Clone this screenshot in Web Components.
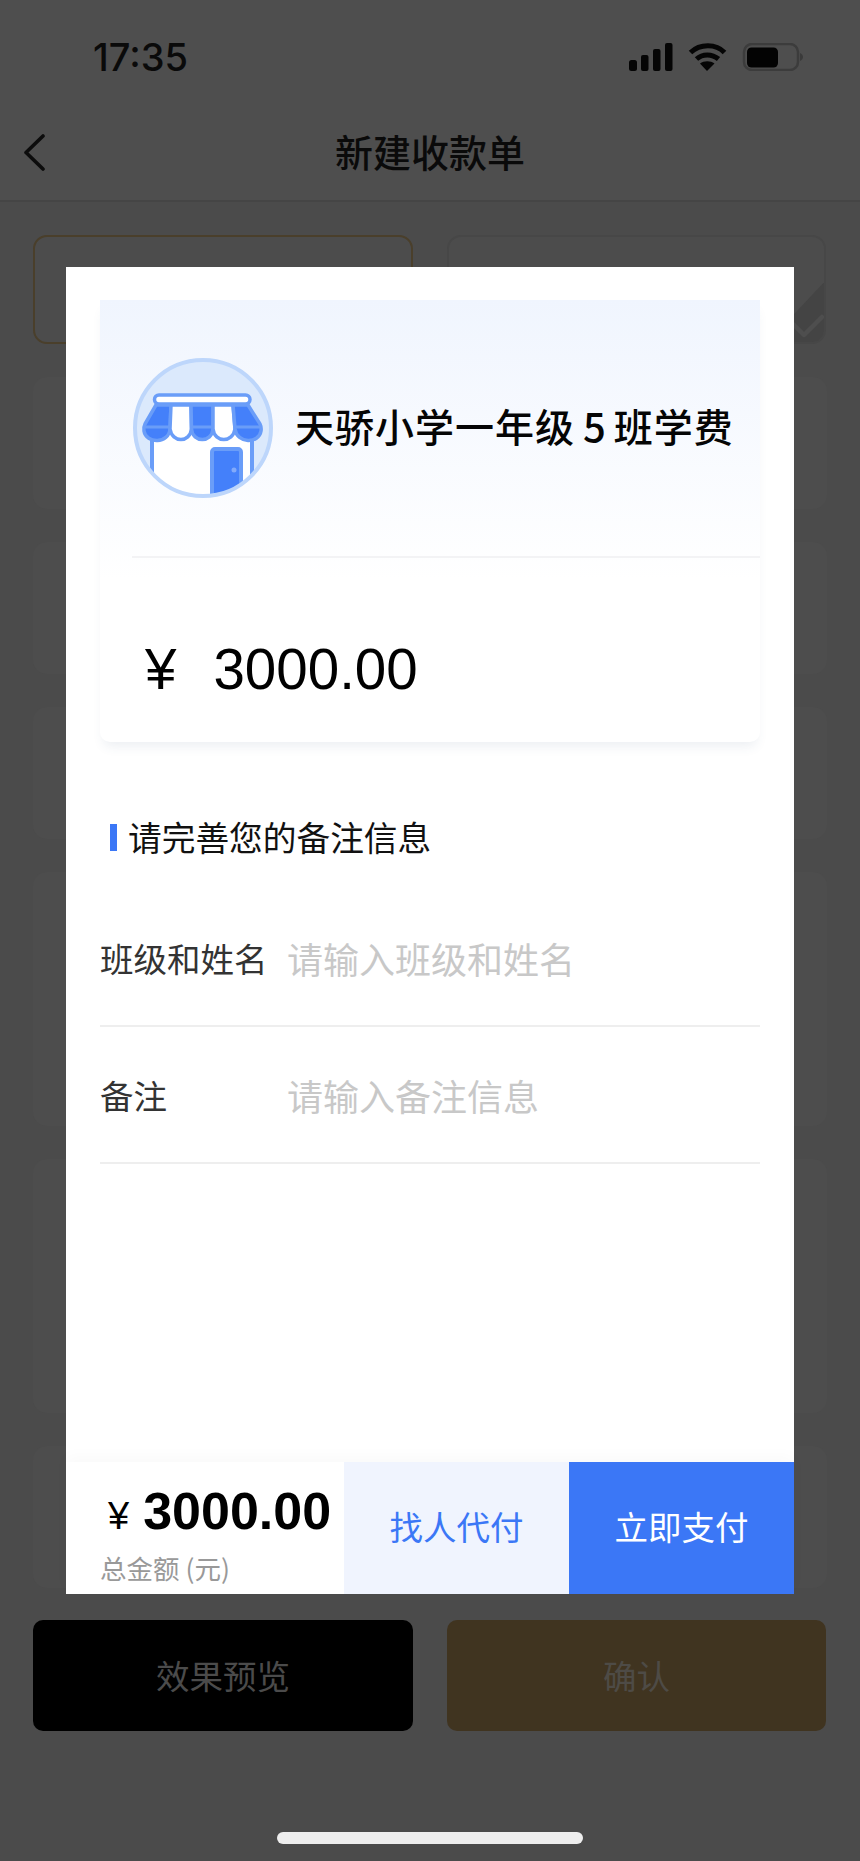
<!DOCTYPE html>
<html lang="zh">
<head>
<meta charset="utf-8">
<title>新建收款单</title>
<style>
  html, body { margin: 0; padding: 0; }
  body {
    width: 860px;
    height: 1861px;
    overflow: hidden;
    position: relative;
    background: #4b4b4b;
    font-family: "Liberation Sans", "Noto Sans CJK SC", sans-serif;
  }
</style>
</head>
<body>
  <status-bar time="17:35"></status-bar>
  <nav-bar>新建收款单</nav-bar>

  <form-page>
    <choice-card slot="choices" variant="active"></choice-card>
    <choice-card slot="choices" variant="checked"></choice-card>
    <form-block size="s"></form-block>
    <form-block size="s"></form-block>
    <form-block size="s"></form-block>
    <form-block size="l"></form-block>
    <form-block size="l"></form-block>
    <form-block size="m"></form-block>
    <page-button slot="buttons" kind="dark">效果预览</page-button>
    <page-button slot="buttons" kind="gold">确认</page-button>
  </form-page>

  <home-bar></home-bar>

  <pay-modal>
    <bill-card slot="bill" name="天骄小学一年级" suffix="班学费" num="5" amount="3000.00"></bill-card>
    <section-title slot="form">请完善您的备注信息</section-title>
    <field-row slot="form" label="班级和姓名" placeholder="请输入班级和姓名"></field-row>
    <field-row slot="form" label="备注" placeholder="请输入备注信息"></field-row>
    <action-bar slot="actions" amount="3000.00" caption="总金额 (元)"></action-bar>
  </pay-modal>

<script>
class StatusBar extends HTMLElement {
  constructor() {
    super();
    this.attachShadow({mode: 'open'});
    this.shadowRoot.innerHTML = `
      <style>
        :host {
          display: flex;
          justify-content: space-between;
          align-items: flex-start;
          height: 110px;
          box-sizing: border-box;
          padding: 43px 56px 0 93px;
          background: #4e4e4e;
        }
        .time {
          font: 500 38px/28px Inter, "Liberation Sans", sans-serif;
          color: #0a0a0a;
        }
        svg { display: block; }
      </style>
      <div class="time"></div>
      <svg width="175" height="28" viewBox="0 0 175 28">
        <rect x="0" y="17" width="8" height="11" rx="2.500" fill="#050505"/>
        <rect x="12" y="12" width="7.500" height="16" rx="2" fill="#050505"/>
        <rect x="24" y="6" width="7.500" height="22" rx="2" fill="#050505"/>
        <rect x="36" y="0" width="7.500" height="28" rx="2" fill="#050505"/>
        <g fill="none" stroke="#050505" stroke-width="5">
          <path d="M61.500 9.500C71 .5 87 .5 95.500 9.500"/>
          <path d="M67.500 16C73.500 10.500 83 10.500 89.500 16"/>
        </g>
        <path d="M71 20.500C75 17.500 81.500 17.500 85.500 20.500L78 28Z" fill="#050505"/>
        <rect x="115" y="1" width="54" height="26" rx="8" fill="none" stroke="#3c3c3c" stroke-width="2.500"/>
        <rect x="118" y="4.500" width="31" height="20" rx="4.500" fill="#030303"/>
        <path d="M171 10c2 1 3 2.500 3 4s-1 3-3 4z" fill="#3a3a3a"/>
      </svg>`;
    this.shadowRoot.querySelector('.time').textContent = this.getAttribute('time');
  }
}

class NavBar extends HTMLElement {
  constructor() {
    super();
    this.attachShadow({mode: 'open'});
    this.shadowRoot.innerHTML = `
      <style>
        :host {
          display: flex;
          align-items: center;
          justify-content: center;
          position: relative;
          height: 92px;
          box-sizing: border-box;
          padding-bottom: 8px;
          background: #4e4e4e;
          border-bottom: 2px solid #454545;
          font: 500 38px/44px "Noto Sans CJK SC", sans-serif;
          color: #0a0a0a;
        }
        svg { position: absolute; left: 22px; top: 23px; }
      </style>
      <svg width="24" height="38" viewBox="0 0 24 38" fill="none" stroke="#0c0c0c" stroke-width="3.600" stroke-linecap="round" stroke-linejoin="round">
        <path d="M21 3 4 19.500 21 36"/>
      </svg>
      <slot></slot>`;
  }
}

class FormPage extends HTMLElement {
  constructor() {
    super();
    this.attachShadow({mode: 'open'});
    this.shadowRoot.innerHTML = `
      <style>
        :host {
          display: flex;
          flex-direction: column;
          gap: 33px;
          padding: 33px 33px 0;
        }
        .pair {
          display: grid;
          grid-template-columns: 380px 379px;
          gap: 34px;
        }
        .buttons { margin-top: -1px; }
      </style>
      <div class="pair"><slot name="choices"></slot></div>
      <slot></slot>
      <div class="pair buttons"><slot name="buttons"></slot></div>`;
  }
}

class ChoiceCard extends HTMLElement {
  constructor() {
    super();
    this.attachShadow({mode: 'open'});
    const checked = this.getAttribute('variant') === 'checked';
    this.shadowRoot.innerHTML = `
      <style>
        :host {
          display: block;
          height: 109px;
          box-sizing: border-box;
          border-radius: 14px;
          overflow: hidden;
          position: relative;
          background: #4c4c4c;
          border: 2px solid ${checked ? '#474747' : '#4a3f2b'};
        }
        svg { position: absolute; right: -2px; bottom: -2px; }
      </style>
      ${checked ? `<svg width="60" height="64" viewBox="0 0 60 64">
        <path d="M60 0V64H0Z" fill="#444"/>
        <path d="M27 44l11 11 18-18" fill="none" stroke="#4e4e4e" stroke-width="4.500" stroke-linecap="round" stroke-linejoin="round"/>
      </svg>` : ''}`;
  }
}

class FormBlock extends HTMLElement {
  constructor() {
    super();
    this.attachShadow({mode: 'open'});
    const heights = {s: 132, m: 142, l: 254};
    this.shadowRoot.innerHTML = `
      <style>
        :host {
          display: block;
          height: ${heights[this.getAttribute('size')]}px;
          width: 794px;
          border-radius: 14px;
          background: #4d4d4d;
        }
      </style>`;
  }
}

class PageButton extends HTMLElement {
  constructor() {
    super();
    this.attachShadow({mode: 'open'});
    const gold = this.getAttribute('kind') === 'gold';
    this.shadowRoot.innerHTML = `
      <style>
        :host {
          display: flex;
          align-items: center;
          justify-content: center;
          height: 111px;
          border-radius: 10px;
          padding-bottom: 2px;
          box-sizing: border-box;
          background: ${gold ? '#403420' : '#000'};
          color: ${gold ? '#4e4b46' : '#4b4b4b'};
          font: 400 33.500px/40px "Noto Sans CJK SC", sans-serif;
        }
      </style>
      <slot></slot>`;
  }
}

class HomeBar extends HTMLElement {
  constructor() {
    super();
    this.attachShadow({mode: 'open'});
    this.shadowRoot.innerHTML = `
      <style>
        :host {
          position: absolute;
          left: 277px;
          top: 1832px;
          width: 306px;
          height: 12px;
          border-radius: 6px;
          background: #eee;
        }
      </style>`;
  }
}

class PayModal extends HTMLElement {
  constructor() {
    super();
    this.attachShadow({mode: 'open'});
    this.shadowRoot.innerHTML = `
      <style>
        :host {
          position: absolute;
          left: 66px;
          top: 267px;
          width: 728px;
          height: 1327px;
          display: flex;
          flex-direction: column;
          background: #fff;
        }
        .bill { padding: 33px 34px 0; }
        .form {
          flex: 1;
          padding: 77px 34px 0;
          display: flex;
          flex-direction: column;
        }
      </style>
      <div class="bill"><slot name="bill"></slot></div>
      <div class="form"><slot name="form"></slot></div>
      <slot name="actions"></slot>`;
  }
}

class BillCard extends HTMLElement {
  constructor() {
    super();
    this.attachShadow({mode: 'open'});
    this.shadowRoot.innerHTML = `
      <style>
        :host {
          display: block;
          height: 442px;
          border-radius: 0 0 10px 10px;
          background: #fff;
          box-shadow: 0 8px 12px -4px rgba(60, 90, 130, .1);
        }
        .head {
          display: flex;
          align-items: center;
          gap: 21px;
          height: 280px;
          box-sizing: border-box;
          padding: 0 0 24px 32px;
          background: linear-gradient(#f0f5fe, #fff);
          margin-bottom: -24px;
        }
        .name {
          margin-top: -6px;
          font: 500 39px/48px "Noto Sans CJK SC", sans-serif;
          letter-spacing: 1px;
          color: #050505;
          white-space: nowrap;
        }
        .name b {
          font-weight: 500;
          font-size: 40px;
          letter-spacing: 0;
          margin: 0 8px 0 8px;
        }
        hr {
          position: relative;
          margin: 0 0 0 32px;
          border: 0;
          height: 2px;
          background: #f3f3f5;
        }
        .amount {
          display: flex;
          align-items: baseline;
          gap: 37px;
          padding: 81px 0 0 45px;
          font: 400 56.500px/62px "Liberation Sans", sans-serif;
          color: #000;
        }
        svg { display: block; flex: none; }
      </style>
      <div class="head">
        <svg width="142" height="142" viewBox="0 0 142 142">
          <defs><clipPath id="disc"><circle cx="71" cy="71" r="68"/></clipPath></defs>
          <circle cx="71" cy="71" r="68" fill="#dbe9fc"/>
          <g clip-path="url(#disc)">
            <path d="M20 70H120V150H20Z" fill="#fff" stroke="#6a9df8" stroke-width="4"/>
            <path d="M80 152V95a3 3 0 0 1 3-3h23a3 3 0 0 1 3 3v57Z" fill="#4480fa" stroke="#6a9df8" stroke-width="4"/>
            <circle cx="102" cy="113" r="2.500" fill="#82aafa"/>
          </g>
          <rect x="22.500" y="38" width="95.500" height="9" rx="4.500" fill="#fff" stroke="#6a9df8" stroke-width="3.500"/>
          <!-- awning: five scallops, blue and white in turn -->
          <g stroke="#6a9df8" stroke-width="3.500" stroke-linejoin="round">
            <path d="M24 48H39L38 72C37 87 14 87 12 74C11.500 71 12 69 13 67Z" fill="#4480fa"/>
            <path d="M39 48H59L59.500 72C58 86 40 86 38 72Z" fill="#fff"/>
            <path d="M59 48H81L81 72C80 86 60.500 86 59.500 72Z" fill="#4480fa"/>
            <path d="M81 48H101L103 72C101 86 82.500 86 81 72Z" fill="#fff"/>
            <path d="M101 48H116L128 67C129 69 129.500 71 129 74C127 87 105 87 103 72Z" fill="#4480fa"/>
          </g>
          <path d="M13 70H38M60 70H81M103 70H128" stroke="#6a9df8" stroke-width="3"/>
          <circle cx="71" cy="71" r="68" fill="none" stroke="#bdd6fb" stroke-width="4"/>
        </svg>
        <div class="name"></div>
      </div>
      <hr>
      <div class="amount"><span>¥</span><span class="sum"></span></div>`;
    const name = this.shadowRoot.querySelector('.name');
    name.append(this.getAttribute('name'));
    const num = document.createElement('b');
    num.textContent = this.getAttribute('num');
    name.append(num, this.getAttribute('suffix'));
    this.shadowRoot.querySelector('.sum').textContent = this.getAttribute('amount');
  }
}

class SectionTitle extends HTMLElement {
  constructor() {
    super();
    this.attachShadow({mode: 'open'});
    this.shadowRoot.innerHTML = `
      <style>
        :host {
          display: flex;
          align-items: center;
          gap: 11px;
          height: 36px;
          padding-left: 10px;
          margin-bottom: 35px;
          font: 400 33.700px/36px "Noto Sans CJK SC", sans-serif;
          color: #111;
        }
        i { width: 7px; height: 27px; background: #3b77f6; }
      </style>
      <i></i><span><slot></slot></span>`;
  }
}

class FieldRow extends HTMLElement {
  constructor() {
    super();
    this.attachShadow({mode: 'open'});
    this.shadowRoot.innerHTML = `
      <style>
        :host {
          display: flex;
          align-items: center;
          height: 137px;
          box-sizing: border-box;
          border-bottom: 2px solid #eee;
        }
        .label {
          width: 187px;
          font: 400 33.500px/40px "Noto Sans CJK SC", sans-serif;
          color: #333;
        }
        .hint {
          font: 400 36px/44px "Noto Sans CJK SC", sans-serif;
          color: #c8c8c8;
        }
      </style>
      <div class="label"></div>
      <div class="hint"></div>`;
    this.shadowRoot.querySelector('.label').textContent = this.getAttribute('label');
    this.shadowRoot.querySelector('.hint').textContent = this.getAttribute('placeholder');
  }
}

class ActionBar extends HTMLElement {
  constructor() {
    super();
    this.attachShadow({mode: 'open'});
    this.shadowRoot.innerHTML = `
      <style>
        :host {
          display: grid;
          grid-template-columns: 278px 225px 225px;
          height: 132px;
          background: #fff;
          box-shadow: 0 -6px 14px rgba(0, 0, 0, .025);
        }
        .total { padding: 21px 0 0 34px; }
        .sum {
          display: flex;
          align-items: baseline;
          gap: 14px;
          margin-left: 8px;
          font: 700 52px/56px "Liberation Sans", sans-serif;
          color: #000;
        }
        .sum span:first-child { font-size: 38px; font-weight: 400; }
        .caption {
          margin-top: 8px;
          font: 400 26.500px/32px "Noto Sans CJK SC", sans-serif;
          color: #999;
        }
        .btn {
          display: flex;
          align-items: center;
          justify-content: center;
          padding-bottom: 4px;
          font: 400 33.500px/40px "Noto Sans CJK SC", sans-serif;
        }
        .ghost { background: #f0f4fe; color: #3b77f6; }
        .solid { background: #3b77f6; color: #fff; }
      </style>
      <div class="total">
        <div class="sum"><span>¥</span><span class="num"></span></div>
        <div class="caption"></div>
      </div>
      <div class="btn ghost">找人代付</div>
      <div class="btn solid">立即支付</div>`;
    this.shadowRoot.querySelector('.num').textContent = this.getAttribute('amount');
    this.shadowRoot.querySelector('.caption').textContent = this.getAttribute('caption');
  }
}

customElements.define('status-bar', StatusBar);
customElements.define('nav-bar', NavBar);
customElements.define('form-page', FormPage);
customElements.define('choice-card', ChoiceCard);
customElements.define('form-block', FormBlock);
customElements.define('page-button', PageButton);
customElements.define('home-bar', HomeBar);
customElements.define('pay-modal', PayModal);
customElements.define('bill-card', BillCard);
customElements.define('section-title', SectionTitle);
customElements.define('field-row', FieldRow);
customElements.define('action-bar', ActionBar);
</script>
</body>
</html>
